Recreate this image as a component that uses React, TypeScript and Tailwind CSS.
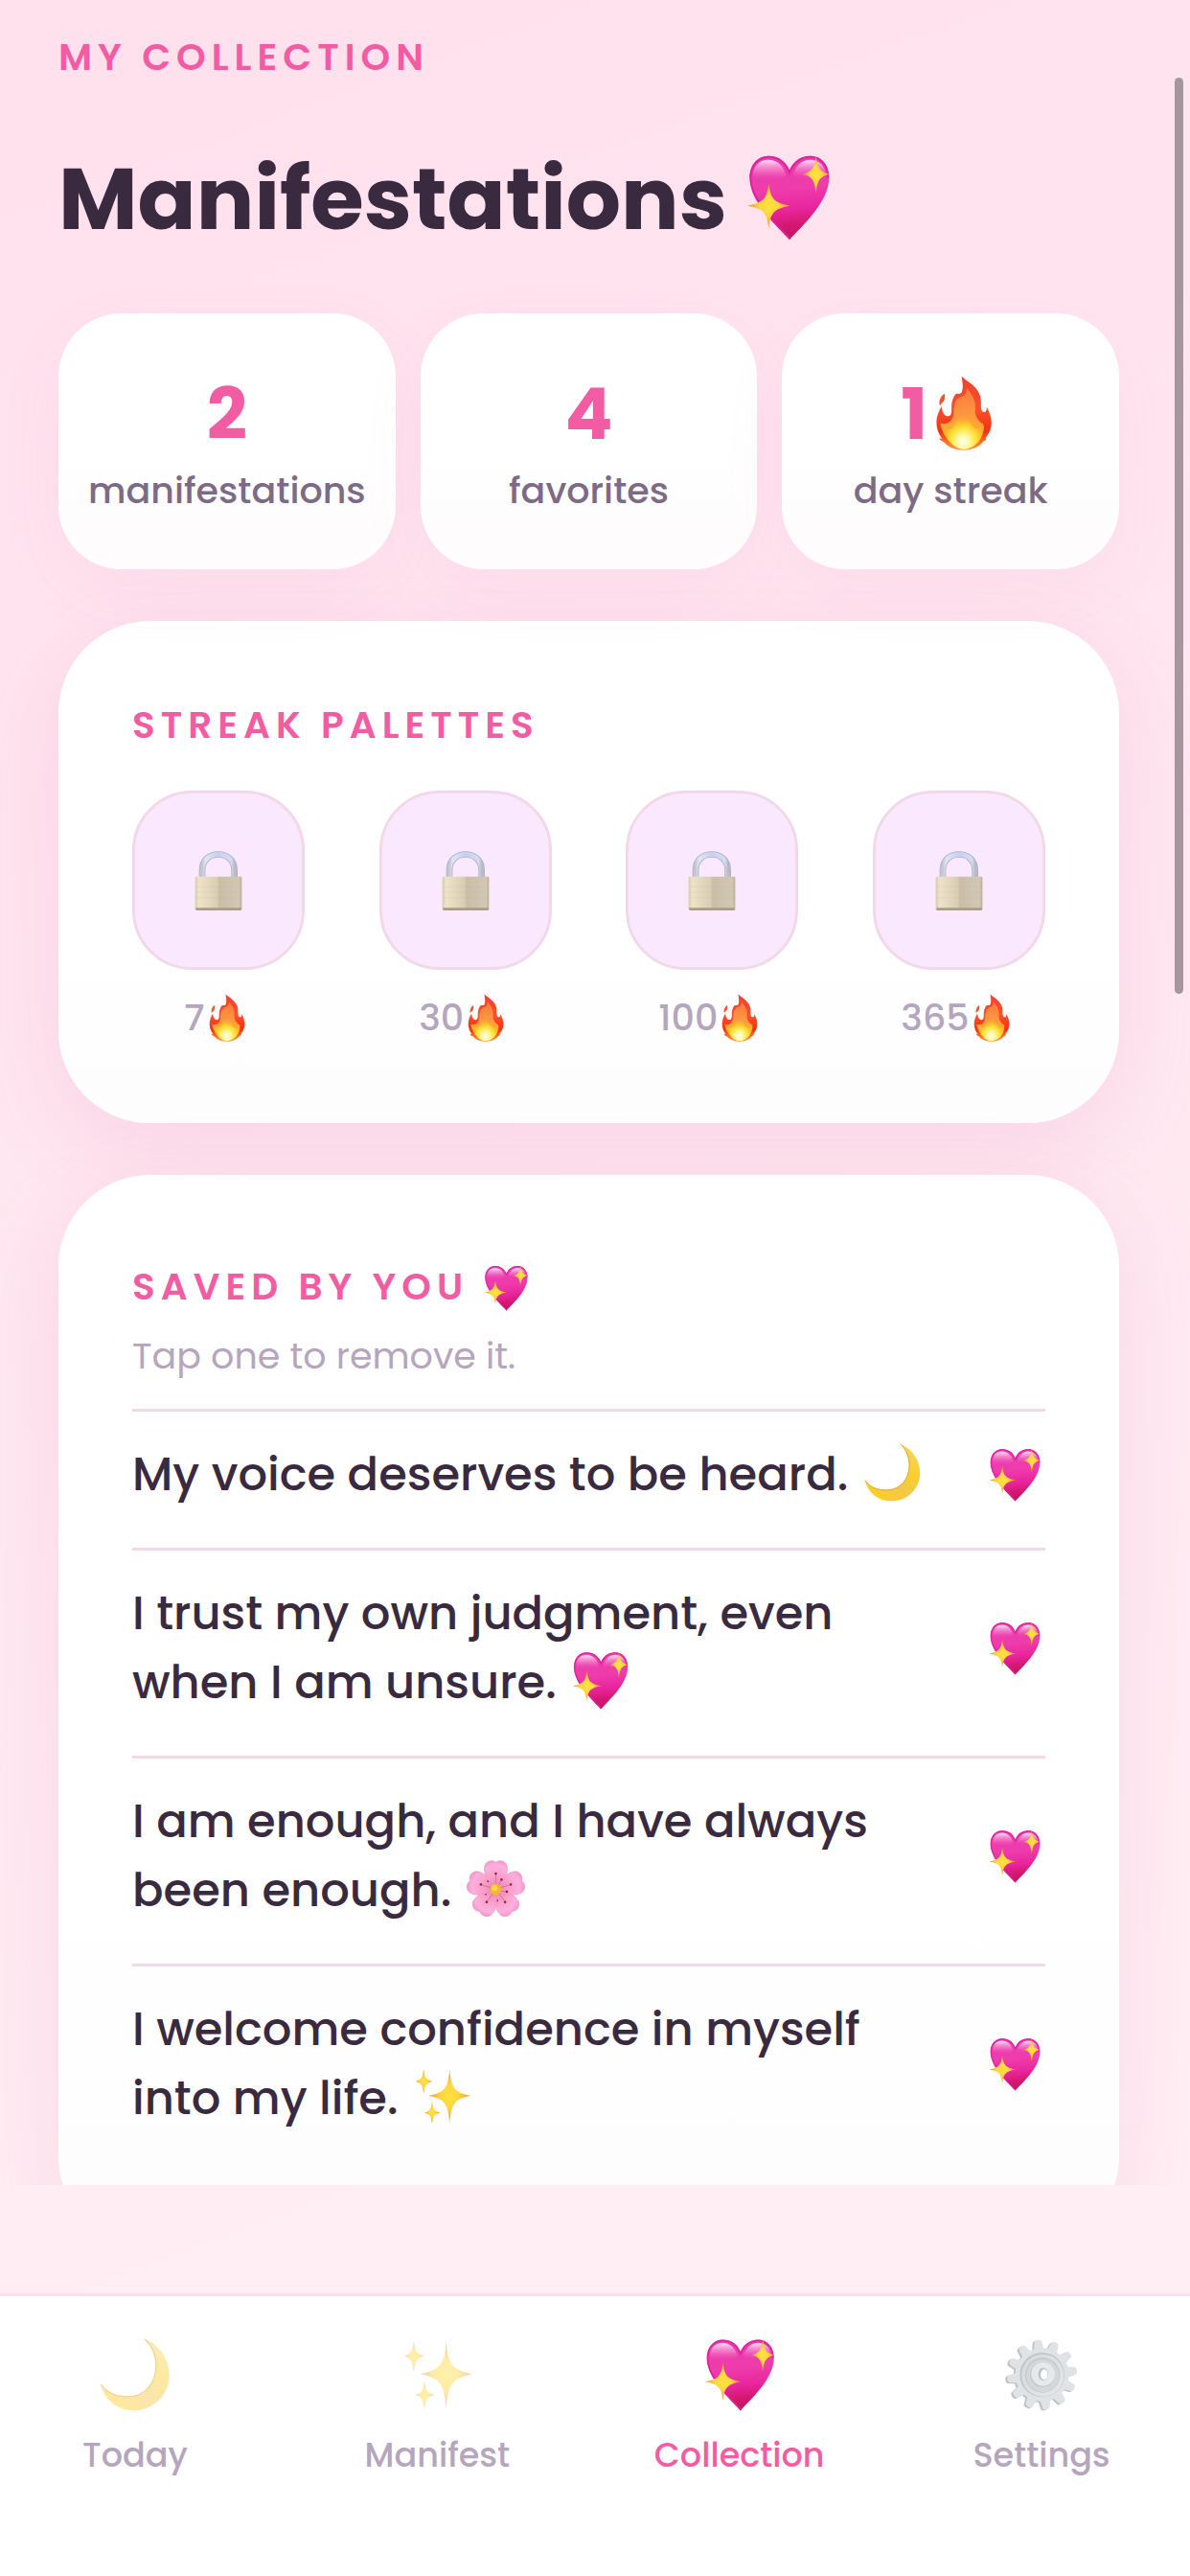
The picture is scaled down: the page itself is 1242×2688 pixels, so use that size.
import { useState } from 'react'
import type { ReactNode } from 'react'

type IconProps = { className?: string }

/* Gradients shared by every drawn emoji */
function EmojiDefs() {
  return (
    <svg className="absolute size-0" aria-hidden="true">
      <defs>
        <linearGradient id="heart" x1="0.4" y1="0" x2="0.5" y2="1">
          <stop offset="0" stopColor="#e93bab" />
          <stop offset="0.4" stopColor="#ee3cad" />
          <stop offset="0.65" stopColor="#e9249c" />
          <stop offset="0.82" stopColor="#d41872" />
          <stop offset="1" stopColor="#c4155c" />
        </linearGradient>
        <linearGradient id="gloss" x1="0" y1="0" x2="0" y2="1">
          <stop offset="0" stopColor="#fff" stopOpacity="0.85" />
          <stop offset="0.5" stopColor="#fbb6e2" stopOpacity="0.4" />
          <stop offset="1" stopColor="#ee3cad" stopOpacity="0" />
        </linearGradient>
        <radialGradient id="star">
          <stop offset="0" stopColor="#ffe23f" />
          <stop offset="0.45" stopColor="#ffd640" />
          <stop offset="1" stopColor="#f0912c" />
        </radialGradient>
        <linearGradient id="flame" x1="0" y1="0" x2="0" y2="1">
          <stop offset="0" stopColor="#ee4230" />
          <stop offset="0.45" stopColor="#fb4f2c" />
          <stop offset="0.75" stopColor="#f9300f" />
          <stop offset="1" stopColor="#ffa03c" />
        </linearGradient>
        <linearGradient id="flameMid" x1="0" y1="0" x2="0" y2="1">
          <stop offset="0" stopColor="#fb7a3c" />
          <stop offset="0.45" stopColor="#ff9640" />
          <stop offset="0.8" stopColor="#ffb52a" />
          <stop offset="1" stopColor="#ffd83a" />
        </linearGradient>
        <radialGradient id="flameCore" cx="0.5" cy="0.82" r="0.62">
          <stop offset="0" stopColor="#fffef0" />
          <stop offset="0.25" stopColor="#fff9a8" />
          <stop offset="0.6" stopColor="#ffe02c" stopOpacity="0.95" />
          <stop offset="1" stopColor="#ffb52e" stopOpacity="0" />
        </radialGradient>
        <linearGradient id="moon" x1="0.9" y1="0.1" x2="0.3" y2="1">
          <stop offset="0" stopColor="#f7d55a" />
          <stop offset="0.35" stopColor="#fbcf2c" />
          <stop offset="0.65" stopColor="#f2c748" />
          <stop offset="1" stopColor="#ffcf22" />
        </linearGradient>
        <radialGradient id="petal" cx="0.5" cy="1" r="1">
          <stop offset="0" stopColor="#ef7fae" />
          <stop offset="0.5" stopColor="#f9a0cb" />
          <stop offset="0.85" stopColor="#fdb0de" />
          <stop offset="1" stopColor="#f799cb" />
        </radialGradient>
        <linearGradient id="shackle" x1="0" y1="0" x2="1" y2="0">
          <stop offset="0" stopColor="#c3c6d4" />
          <stop offset="0.1" stopColor="#dfe5fa" />
          <stop offset="0.5" stopColor="#c5d0f0" />
          <stop offset="0.9" stopColor="#d6dcf6" />
          <stop offset="1" stopColor="#b8bac8" />
        </linearGradient>
        <linearGradient id="brass" x1="0" y1="0" x2="1" y2="0">
          <stop offset="0" stopColor="#d8cba9" />
          <stop offset="0.08" stopColor="#eee3c8" />
          <stop offset="0.47" stopColor="#d9cdb4" />
          <stop offset="0.52" stopColor="#c9bea8" />
          <stop offset="0.94" stopColor="#d2c7b2" />
          <stop offset="1" stopColor="#b9ac96" />
        </linearGradient>
        <linearGradient id="steel" x1="0" y1="0" x2="1" y2="1">
          <stop offset="0" stopColor="#a9b0b5" />
          <stop offset="1" stopColor="#c6cbcf" />
        </linearGradient>
      </defs>
    </svg>
  )
}

function Heart({ className }: IconProps) {
  return (
    <svg viewBox="52 65 260 270" className={className} aria-hidden="true">
      <path
        d="M185 333C150 293 60 217 60 138C60 96 86 70 120 70C150 70 175 88 185 114C195 88 220 70 250 70C284 70 309 96 309 138C309 217 220 293 185 333Z"
        fill="url(#heart)"
      />
      <path
        d="M185 327C152 290 63 214 63 138C63 98 88 73 120 73C150 73 174 92 185 123C196 92 220 73 250 73C282 73 306 98 306 138"
        fill="none"
        stroke="#dc1f9c"
        strokeWidth="5"
      />
      <path d="M71 142C68 104 88 82 119 82C148 82 168 104 174 132C150 150 100 160 71 142Z" fill="url(#gloss)" />
      <path d="M196 132C202 104 222 82 250 82C278 82 298 102 299 132C270 150 220 150 196 132Z" fill="url(#gloss)" />
      <path
        d="M120 155C126 205 136 216 186 226C136 236 126 247 120 296C114 247 104 236 54 226C104 216 114 205 120 155Z"
        fill="url(#star)"
      />
      <path
        d="M268 67C272 108 280 120 311 127C280 134 272 146 268 188C264 146 256 134 226 127C256 120 264 108 268 67Z"
        fill="url(#star)"
      />
    </svg>
  )
}

function Fire({ className }: IconProps) {
  return (
    <svg viewBox="50 68 174 232" className={className} aria-hidden="true">
      <path
        d="M130 70C150 88 178 100 188 132C193 150 186 168 195 180C206 184 208 176 208 165C218 184 224 202 222 222C220 240 212 250 204 262C208 265 205 270 198 272C184 290 164 299 138 299C110 299 88 290 74 273C66 271 60 266 62 262L70 265C58 248 52 232 52 214C52 194 60 176 68 163C69 180 76 194 88 194C104 192 96 170 100 150C104 136 108 128 114 124C120 124 128 126 131 118C136 102 132 86 130 70Z"
        fill="url(#flame)"
      />
      <path d="M77 124C80 140 76 148 68 154C64 157 64 160 63 162C58 150 62 134 77 124Z" fill="#f2542f" />
      <path
        d="M146 106C160 124 176 144 172 176C172 196 182 206 190 214C206 214 200 256 178 278C156 296 120 294 98 278C80 262 68 240 64 216C88 222 106 208 106 178C106 150 118 134 132 132C142 128 146 118 146 106Z"
        fill="url(#flameMid)"
      />
      <path
        d="M134 168C150 184 152 208 164 224C176 238 188 234 194 228C196 262 174 294 138 297C102 294 80 266 76 228C94 240 108 228 114 210C118 196 132 190 134 168Z"
        fill="url(#flameCore)"
      />
    </svg>
  )
}

function Moon({ className }: IconProps) {
  return (
    <svg viewBox="126 80 179 186" className={className} aria-hidden="true">
      <path
        d="M240 82C280 98 303 135 303 175C303 225 262 264 213 264C172 264 138 240 128 198C145 222 170 230 200 229C240 227 269 195 269 150C269 125 260 100 240 82Z"
        fill="url(#moon)"
      />
      <path
        d="M128 198C145 222 170 230 200 229C240 227 269 195 269 150C269 125 260 100 240 82"
        fill="none"
        stroke="#d9a520"
        strokeWidth="3"
      />
    </svg>
  )
}

function Sparkles({ className }: IconProps) {
  return (
    <svg viewBox="149 120 180 180" className={className} aria-hidden="true">
      <g fill="url(#star)">
        <path d="M262 128C267 184 276 198 327 208C276 218 267 234 262 292C257 234 248 218 197 208C248 198 257 184 262 128Z" />
        <path d="M182 127C185 152 189 159 208 164C189 169 185 177 182 202C179 177 175 169 158 164C175 159 179 152 182 127Z" />
        <path d="M208 226C211 250 215 255 233 260C215 265 211 270 208 295C205 270 201 265 185 260C201 255 205 250 208 226Z" />
      </g>
    </svg>
  )
}

function Flower({ className }: IconProps) {
  return (
    <svg viewBox="-93 -96 186 186" className={className} aria-hidden="true">
      {[144, 216, 72, 288, 0].map((angle) => (
        <g key={angle} transform={`rotate(${angle})`}>
          <path
            d="M0 0C-24 -22 -42 -52 -35 -76C-30 -90 -12 -96 0 -86C12 -96 30 -90 35 -76C42 -52 24 -22 0 0Z"
            fill="url(#petal)"
            stroke="#ee93c1"
            strokeWidth="2"
          />
          <path d="M0 -14V-48M9 -12L18 -30" stroke="#cf5f8d" strokeWidth="2" />
          <circle cx="0" cy="-50" r="4" fill="#8c2552" />
          <circle cx="18" cy="-31" r="4" fill="#8c2552" />
        </g>
      ))}
      <circle r="18" fill="#f0b836" />
      <circle cx="-4" cy="-4" r="9" fill="#ffd84e" />
    </svg>
  )
}

function Lock({ className }: IconProps) {
  return (
    <svg viewBox="244 260 150 190" className={className} aria-hidden="true">
      <path d="M268 346V322C268 256 369 256 369 322V346" fill="none" stroke="#b3afbb" strokeWidth="20" />
      <path d="M268 346V322C268 256 369 256 369 322V346" fill="none" stroke="url(#shackle)" strokeWidth="15" />
      <rect x="246" y="342" width="146" height="106" rx="4" fill="url(#brass)" />
      <path d="M248 374H390M248 391H390M248 408H390" stroke="#c6b891" strokeOpacity="0.25" strokeWidth="2" />
      <path d="M248 440H390V444Q390 448 386 448H252Q248 448 248 444Z" fill="#a99d88" />
    </svg>
  )
}

function Gear({ className }: IconProps) {
  const teeth = Array.from({ length: 12 }, (_, i) => i * 30 - 7)
  return (
    <svg viewBox="-116 -114 228 228" className={className} aria-hidden="true">
      {[
        { x: -6, y: 3, color: '#77787a' },
        { x: 0, y: 0, color: '#bcc3c9' },
      ].map((layer) => (
        <g key={layer.color} fill={layer.color} transform={`translate(${layer.x} ${layer.y})`}>
          <circle r="84" />
          {teeth.map((angle) => (
            <path key={angle} d="M-16 -78L-11 -106Q0 -114 11 -106L16 -78Z" transform={`rotate(${angle})`} />
          ))}
        </g>
      ))}
      <circle r="70" fill="#7d858b" />
      <circle cx="2" cy="2" r="66" fill="url(#steel)" />
      <circle cx="1" cy="1" r="55" fill="#838b91" />
      <circle cx="2" cy="3" r="51" fill="#a3abb0" />
      <circle cx="1" r="39" fill="#7f868b" />
      <circle cx="3" cy="-2" r="37" fill="#c9cfd4" />
      <ellipse cx="3" cy="-2" rx="15" ry="20" fill="#6d7479" />
      <ellipse cx="6" cy="-1" rx="11" ry="16" fill="#fff" />
    </svg>
  )
}

function Eyebrow({ children }: { children: ReactNode }) {
  return <h2 className="text-[39px] leading-[60px] font-semibold tracking-[6px] text-[#f25ca2]">{children}</h2>
}

function StatCard({ value, label }: { value: ReactNode; label: string }) {
  return (
    <div className="flex-1 rounded-[66px] bg-linear-to-b from-white from-50% to-[#fefcfd] pt-[55px] pb-[52px] text-center shadow-[0_24px_72px_rgba(226,110,168,0.06)]">
      <div className="text-[74px] leading-[100px] font-bold text-[#f25ca2]">{value}</div>
      <div className="text-[38px] leading-[60px] font-medium text-[#7d6b85]">{label}</div>
    </div>
  )
}

function Card({ className, children }: { className: string; children: ReactNode }) {
  return (
    <section
      className={`rounded-[96px] bg-linear-to-b from-white from-60% to-[#fefdfe] px-[77px] shadow-[0_24px_90px_rgba(216,110,168,0.15)] ${className}`}
    >
      {children}
    </section>
  )
}

const palettes = [7, 30, 100, 365]

const initialSaved = [
  { id: 1, text: 'My voice deserves to be heard.', Icon: Moon },
  { id: 2, text: 'I trust my own judgment, even when I am unsure.', Icon: Heart },
  { id: 3, text: 'I am enough, and I have always been enough.', Icon: Flower },
  { id: 4, text: 'I welcome confidence in myself into my life.', Icon: Sparkles },
]

const tabs = [
  { label: 'Today', Icon: Moon },
  { label: 'Manifest', Icon: Sparkles },
  { label: 'Collection', Icon: Heart, active: true },
  { label: 'Settings', Icon: Gear },
]

export default function App() {
  const [saved, setSaved] = useState(initialSaved)

  return (
    <div className="relative flex h-screen flex-col bg-linear-160 from-[#ffe0ed] to-[#fff1f5] font-['Poppins','Inter',sans-serif]">
      <EmojiDefs />

      <main className="mb-[113px] min-h-0 flex-1 overflow-y-auto pt-[30px] pr-[74px] pl-[61px] [scrollbar-width:none]">
        <Eyebrow>MY COLLECTION</Eyebrow>
        <h1 className="mt-[58px] text-[90px] leading-[120px] font-bold text-[#3a2a40]">
          Manifestations <Heart className="inline size-[90px] align-[-12px]" />
        </h1>

        {/* Stats */}
        <div className="mt-[59px] flex gap-[26px]">
          <StatCard value="2" label="manifestations" />
          <StatCard value="4" label="favorites" />
          <StatCard
            value={
              <>
                1<Fire className="mx-2 inline h-[78px] w-[60px] align-[-12px]" />
              </>
            }
            label="day streak"
          />
        </div>

        {/* Streak palettes */}
        <Card className="mt-[54px] pt-[79px] pb-20">
          <Eyebrow>STREAK PALETTES</Eyebrow>
          <ul className="mt-[38px] flex justify-between">
            {palettes.map((days) => (
              <li key={days} className="w-[180px]">
                <div className="flex h-[187px] items-center justify-center rounded-[62px] border-3 border-[#f3d8e7] bg-[#f9e8fe]">
                  <Lock className="h-[64px] w-[50px]" />
                </div>
                <div className="mt-5 text-center text-[38px] leading-[60px] font-medium text-[#b5a5bd]">
                  {days}
                  <Fire className="mr-2 ml-1 inline h-[50px] w-[38px] align-[-12px]" />
                </div>
              </li>
            ))}
          </ul>
        </Card>

        {/* Saved manifestations */}
        <Card className="mt-[54px] pt-[87px] pb-20">
          <Eyebrow>
            SAVED BY YOU <Heart className="inline size-[48px] align-[-12px]" />
          </Eyebrow>
          <p className="mt-3 mb-[25px] text-[38px] leading-[60px] text-[#b5a5bd]">Tap one to remove it.</p>
          <ul>
            {saved.map(({ id, text, Icon }) => (
              <li key={id} className="border-t-3 border-[#f3d8e7]">
                <button
                  type="button"
                  onClick={() => setSaved(saved.filter((item) => item.id !== id))}
                  className="flex w-full items-center justify-between gap-12 pt-[30px] pb-10 text-left"
                >
                  <span className="text-[48px] leading-[72px] font-medium text-[#3a2a40]">
                    {text} <Icon className="ml-[3px] inline size-[61px] align-[-12px]" />
                  </span>
                  <Heart className="mr-1 size-[56px] shrink-0" />
                </button>
              </li>
            ))}
          </ul>
        </Card>
      </main>

      {/* Scroll indicator */}
      <div className="absolute top-[81px] right-[7px] h-[956px] w-[9px] rounded-full bg-[#a5969b]" />

      <nav className="flex justify-between border-t-3 border-[#f9e0ec] bg-white pt-[44px] pr-[55px] pb-[92px] pl-[41px]">
        {tabs.map(({ label, Icon, active }) => (
          <a key={label} href={`#${label.toLowerCase()}`} className="flex w-[200px] flex-col items-center gap-3">
            <Icon className={active ? 'size-[76px]' : 'size-[76px] opacity-45'} />
            <span
              className={
                active
                  ? 'text-[35px] leading-[68px] font-medium text-[#f25ca2]'
                  : 'text-[35px] leading-[68px] font-medium text-[#b5a5bd]'
              }
            >
              {label}
            </span>
          </a>
        ))}
      </nav>
    </div>
  )
}
